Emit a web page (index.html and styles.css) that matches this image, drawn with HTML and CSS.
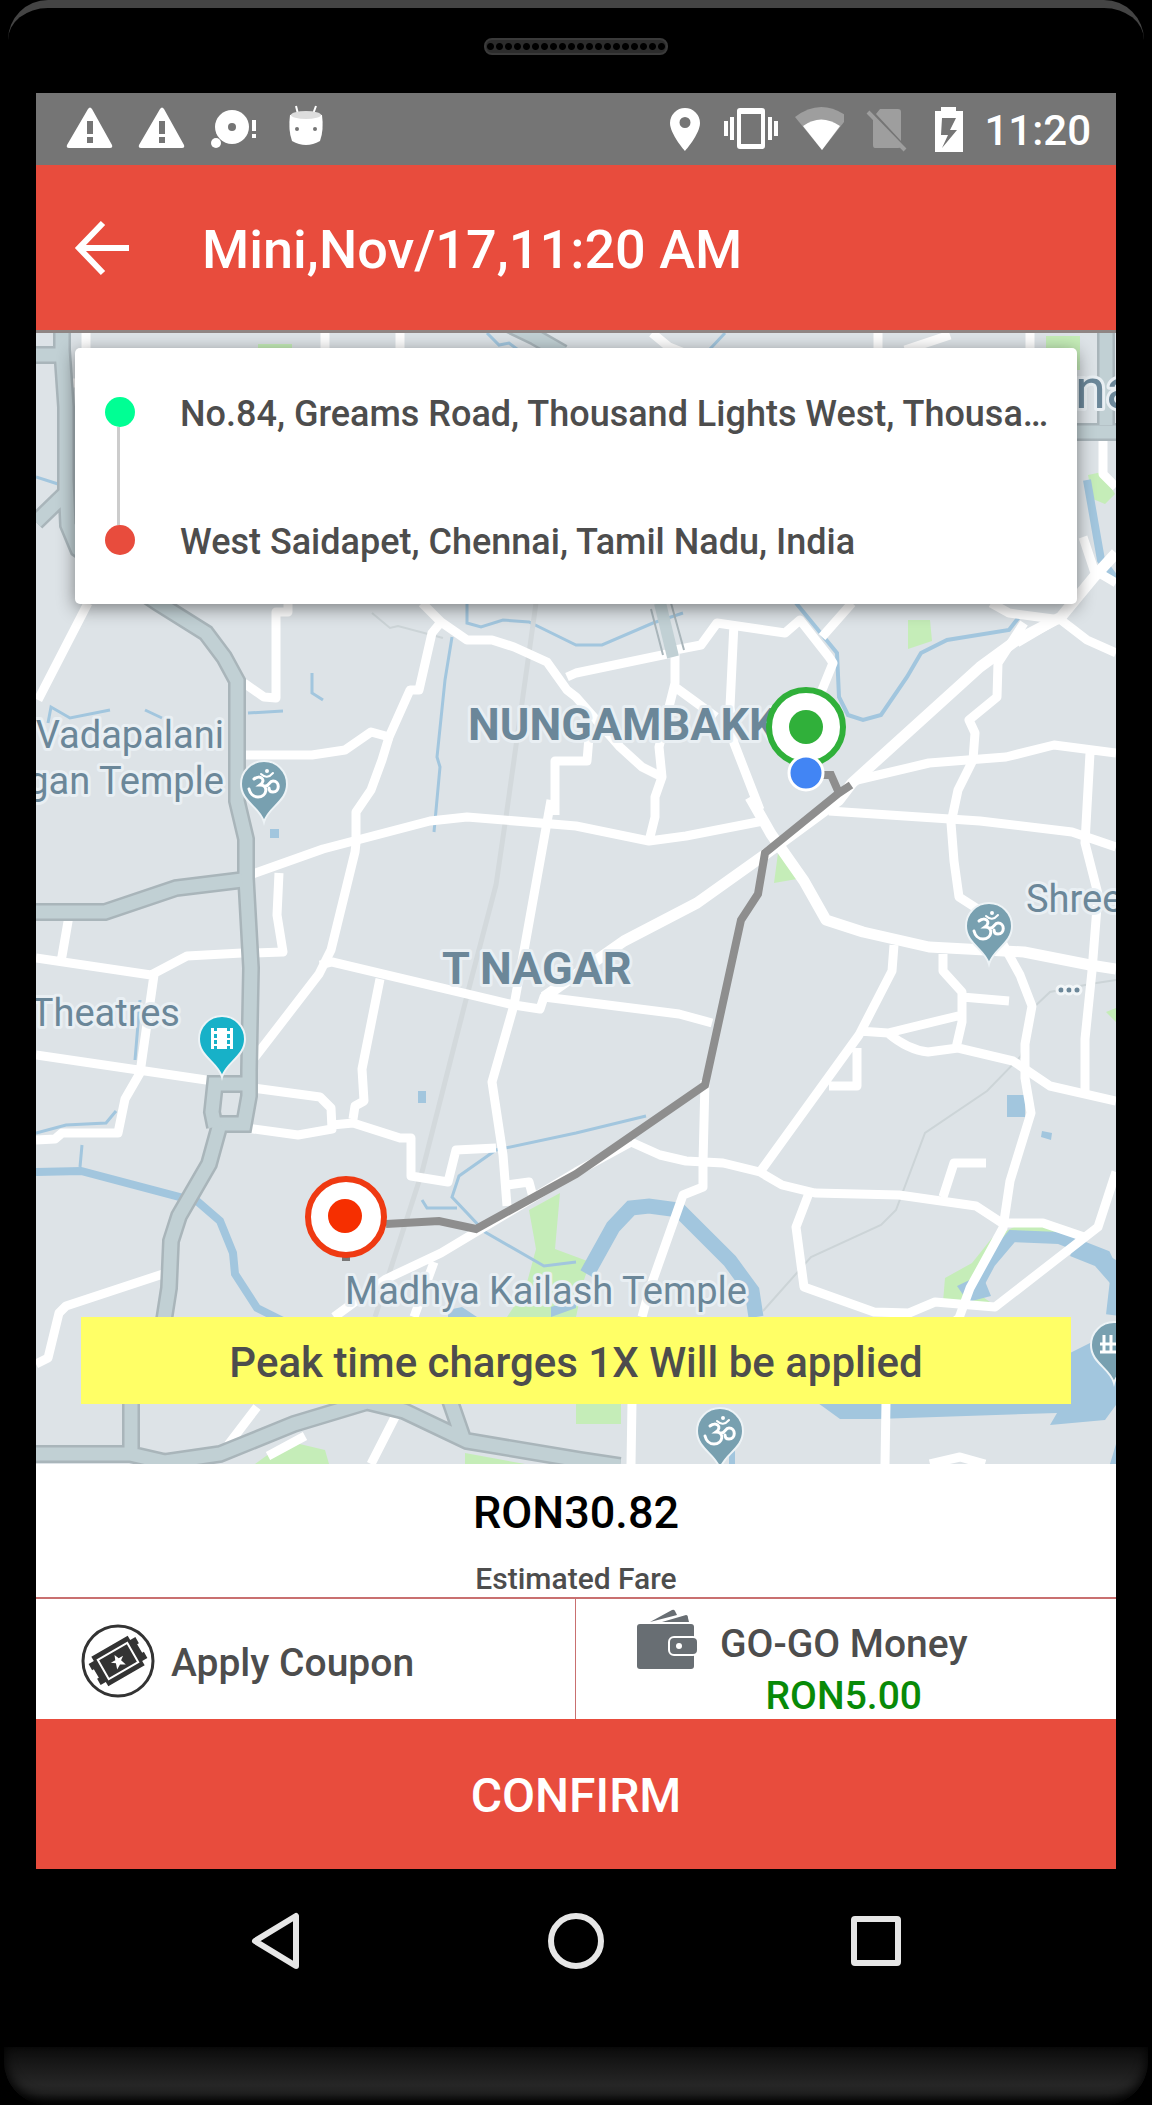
FILE: index.html
```
<!DOCTYPE html>
<html lang="en">
<head>
    <meta charset="UTF-8">
    <meta name="viewport" content="width=device-width, initial-scale=1.0">
    <title>Confirm ride</title>
    <link rel="stylesheet" href="styles.css">
</head>
<body>
    <div class="phone">
        <div class="bezel-top">
            <div class="speaker"></div>
        </div>

        <div class="screen">
            <!-- status bar -->
            <div class="status-bar">
                <div class="notifications">
                    <svg viewBox="0 0 48 48"><path fill="#fff" fill-rule="evenodd" d="M22 4q2-3 4 0l20 36q1 3-2 3H3q-3 0-2-3zM21 16v13h6V16zM21 32v6h6v-6z"/></svg>
                    <svg viewBox="0 0 48 48"><path fill="#fff" fill-rule="evenodd" d="M22 4q2-3 4 0l20 36q1 3-2 3H3q-3 0-2-3zM21 16v13h6V16zM21 32v6h6v-6z"/></svg>
                    <svg viewBox="0 0 48 48" fill="#fff"><circle cx="22" cy="22" r="17"/><circle cx="22" cy="22" r="4" fill="#757575"/><circle cx="6" cy="38" r="5"/><path d="M42 15h4v11h-4zM42 29h4v4h-4z"/></svg>
                    <svg viewBox="0 0 48 48"><path d="M14 1l2 8M34 1l-3 8" stroke="#fff" stroke-width="2"/><path fill="#fff" d="M8 10q16-5 32 0 2 15-2 26-14 8-28 0-4-11-2-26z"/><ellipse cx="24" cy="10" rx="15" ry="4" fill="#ddd"/><circle cx="15" cy="24" r="2" fill="#757575"/><circle cx="33" cy="24" r="2" fill="#757575"/></svg>
                </div>
                <div class="indicators">
                    <svg viewBox="0 0 54 54"><path fill="#fff" fill-rule="evenodd" d="M27 6a15 15 0 0 0-15 15c0 11 15 28 15 28s15-17 15-28A15 15 0 0 0 27 6zm0 9a5.500 5.500 0 1 1 0 11 5.500 5.500 0 0 1 0-11z"/></svg>
                    <svg viewBox="0 0 54 54" fill="#fff"><path fill-rule="evenodd" d="M16 6h22q3 0 3 3v35q0 3-3 3H16q-3 0-3-3V9q0-3 3-3zm1 6v30h20V12zM6 15h4v23H6zM44 15h4v23h-4zM0 19h4v15H0zM50 19h4v15h-4z"/></svg>
                    <svg viewBox="0 0 54 54"><path fill="#9e9e9e" d="M5 15q26-20 53 0L32 48z"/><path fill="#fff" d="M13 24q18-13 37 0L32 48z"/></svg>
                    <svg viewBox="0 0 54 54"><path fill="#9e9e9e" d="M24 7h18q3 0 3 3v29L20 12zM17 16l28 29q-1 1-3 1H19q-2 0-2-3z"/><path d="M12 10l37 38" stroke="#9e9e9e" stroke-width="4"/></svg>
                    <svg viewBox="0 0 54 54"><path fill="#fff" fill-rule="evenodd" d="M19 5h15v4h7v41H13V9h6zM20 16l-1 17h7l-6 13 15-18h-7l6-12z"/></svg>
                    <span class="clock">11:20</span>
                </div>
            </div>

            <header class="app-bar">
                <button class="back" aria-label="Back">
                    <svg viewBox="0 0 60 60"><path d="M31 5L7 30l24 25M7 30h50" fill="none" stroke="#fff" stroke-width="6"/></svg>
                </button>
                <h1>Mini,Nov/17,11:20 AM</h1>
            </header>

            <main class="map">
                <svg class="map-canvas" viewBox="36 333 1080 1131" role="img" aria-label="Route map">
                    <defs>
                        <g id="pin">
                            <path d="M0 38C-4 23-23 18-23 0a23 23 0 0 1 46 0C23 18 4 23 0 38z" stroke="#edf3f6" stroke-width="2"/>
                        </g>
                        <g id="om" fill="none" stroke="#fff" stroke-width="3" stroke-linecap="round">
                            <path d="M-10-5c6-5 13 1 6 6 9 0 7 12-2 12-5 0-8-4-9-8M1 2c4 1 4-5 8-5 7 0 7 11 0 11-3 0-4-2-4-4"/>
                            <path d="M-3-10q6 6 12-1" stroke-width="2"/>
                            <circle cx="3" cy="-13" r="1" stroke-width="2"/>
                        </g>
                        <!-- highways are drawn twice: edge first, then fill -->
                        <g id="highways">
                            <path d="M62 325V350l4 57v86L36 522M66 480l2 45 10 24 80 54 48 30 18 24 13 24v120l9 38v39l5 90-2 102v26l-5 28h-24l-11 40-30 52-8 25-2 47-7 45"/>
                            <path d="M215 1127l-3-15 3-28h31M30 912h75l71-24 66-8M30 355h30M131 1390v64M30 1454h100l35 8 55-8 74-30 73-22 37 9 63 30 113 19 40 6M448 1395l16 46"/>
                            <path d="M500 320l35 17 28 16M1106 325v100M1077 432h50"/>
                        </g>
                    </defs>
                    <rect x="36" y="333" width="1080" height="1131" fill="#dde3e7"/>

                    <!-- parks -->
                    <g fill="#c5edb8">
                        <path d="M908 620h22l2 21-24 8zM778 853l19 26-23 4zM258 344h34v8h-34zM1046 336h34v34h-34zM1088 475l14-3 13 22-10 10-12-5z"/>
                        <path d="M529 1210l31-17-5 56 35 13-6 18-8 37h-69l18-27 11-41zM255 1464l32-23 38 9 4 14zM465 1453l60 11h-60zM576 1402h45v22h-45zM1106 1012l10-4v14z"/>
                        <path d="M943 1302l2-24 27-15 20-25 22-11 45-3 16 10-62 3-28 25-15 26 20 14-5 6z"/>
                    </g>

                    <!-- water -->
                    <g fill="none" stroke="#a2c6de" stroke-width="3">
                        <path d="M452 637l-7 43-8 77 3 10-6 65M467 600v23l14 4 22-7 26 2 47 23h26l51-22 30-10M487 333l12 12 10-2 12 9M725 333l-15 16"/>
                        <path d="M796 603l41 50 2 44 9 18 15 5 18-5 26-38 14-24 26-13 62-10 13-17" stroke-width="4"/>
                        <path d="M646 1116l-70 17-80 17-37 26-7 21 33 35 59 34 32-4M48 723l3-16 19 11 40-8M145 710l17 8M248 713l35-2M312 673v20l11 7M36 477l22 7M140 1000l-5 60M36 1133l30-8 40-2 10-12M82 1145l-2 22M422 1200l5 8 30 0"/>
                        <path d="M1087 480l14 80 15 20" stroke-width="8"/>
                        <path d="M36 1172l45-1 117 31 22 19 13 32 2 21 22 34 26 13" stroke-width="8"/>
                        <path d="M587 1274l26-47 18-19 18-2 30 4 51 51 22 30 4 26" stroke-width="15"/>
                        <path d="M975 1290l15-28 22-26 47 2 46 18 11 24-4 35" stroke-width="12"/>
                    </g>
                    <g fill="#a2c6de">
                        <path d="M957 1286l25-12 9 22-23 6zM1007 1095h18v22h-18zM1042 1131l10 2-1 7-10-3zM270 829h9v9h-9zM418 1091h8v12h-8zM1078 1238l38 22v30l-21-24-25-10z"/>
                        <path d="M800 1390l40 29h37l180-6-7 12 55-5 11-15v-75l-60 30-30 30zM576 1308l-25 9v-10l25-8zM448 1310l14-3 15 10h-29zM1110 1464l6-20v20zM735 1420h-6v44h6z"/>
                    </g>

                    <!-- rail and footpaths -->
                    <path d="M536 603l-29 207-11 75-26 99-48 188-47 145" fill="none" stroke="#d3d9dc" stroke-width="5"/>
                    <path d="M1116 980l-26 4-40 8-18 17-11 47-34 35-62 42-29 77-15 15-70 32-48 54M372 613l18 15 8-2 45 12" fill="none" stroke="#ccd4d7" stroke-width="2"/>

                    <!-- roads -->
                    <g fill="none" stroke="#fff" stroke-width="9" stroke-linejoin="round">
                        <path d="M86 325v30M325 325v30M400 325v30M652 333l17 14 15 6M878 325v30M905 350l45-15M1030 325v30M88 603L38 700M288 600v12h-12v86l-12-1-20-14M70 383h12M70 417h12"/>
                        <path d="M422 603l19 19 26 18h25l22 7 33 15 20 28 9 7 44 50 22 20 20 10M441 622l-9 11-13 57h-9l-21 47-7 23-11 30-15 22v31l-1 9-24 98-12 24-67 87"/>
                        <path d="M244 755h68l33-5 26-18 22 6M555 815v-54h32l2-24M567 677l9-4 96-20M551 800l-26 145-11 60-22 77 11 73 4 51"/>
                        <path d="M250 875l73-26 107-28 37-4 109 9 73 15 37-5 77-15M279 873l-2 42 6 37-30 1M36 958l115 17 36-19 55-3M70 910l-9 52M154 975l-14 98-15 26-7 34H62l-7 6-19 1M36 1055l177 26"/>
                        <path d="M253 1088l67 9 11 11 1 21-34 6-52-7M332 1125l21-2 47 15h11v38l37 6 8-32 40-2M353 1119l2-13 9-5-2-32 18-90M320 965l12-3 182 43 26 4 4-12 32 4 103 13 33 9"/>
                        <path d="M544 997l50-35 30-21 73-38 66-47 76-56 13-17 128-116 37-27 44-23 33-40 22-24" stroke-width="11"/>
                        <path d="M1061 617l-44 26M1024 623l-26 40-1 34-28 23 6 13-2 27-15 30-7 33 3 38 5 36 28 18 33 60 12 31-7 38v34l6 35-21 68-7 47-33 60-11 30-28 22"/>
                        <path d="M991 603l18 10 52 7 26 20 29 13M1083 537l11 33 22 13M1103 437v37l13 13M857 780l72-17 77-6 48-12 62 8M1090 753l-5 90 13 51-6 77-7 68v56M829 811l151 10 92 11 44 15"/>
                        <path d="M675 650l26-5 16-22 68 10 15-13 29 37 4 6-11 27M852 603l-30 34M734 623l-4 84 4 36 26 67M675 650v33l-16 64 3 30-7 20v20l-6 24M675 687l41 30M820 690l-10 40"/>
                        <path d="M750 797l21 37 33 47 22 39 37 12 66 15 95 5 66 13 26 4" stroke-width="11"/>
                        <path d="M894 945l-2 26-33 64-99 137M943 954v17l19 21v30l-6 26M962 997l47 4M859 1031l29 2 74-18M888 1033q20 17 40 19l30-4 55 13 37 25 66 15M857 1048v38h-28"/>
                        <path d="M705 1080l-2 83v24l-20 8-34 96-7 26M631 1142l29 13 26 6 37 2 37 9 22 13 33 8 84 2 77 11 26 17h41l44 15M943 1197l11-34h32"/>
                        <path d="M1116 1172l-18 55-103 80-60-5-26 11-35-1-70-25-8-60 13-34"/>
                        <path d="M631 1142l-55 30-100 60-35 21-55 26-52 38M434 1262l-20 55M257 1407l-29 38M395 1417l-24 47M305 1436l-37 20M632 1402l-1 62M886 1402l-1 62M163 1274l-97 32-7 7-11 45-12 6M507 1185l22-3 4 15M930 1464l30-7 25 7"/>
                    </g>

                    <use href="#highways" fill="none" stroke="#a9b5ba" stroke-width="18"/>
                    <use href="#highways" fill="none" stroke="#c1d0d4" stroke-width="13"/>
                    <path d="M660 603l13 54" stroke="#c1d0d4" stroke-width="12"/>
                    <path d="M651 609l12 46M671 603l13 47" stroke="#a9b5ba" stroke-width="2"/>

                    <!-- selected route -->
                    <path d="M820 775h11l8 18 12-8-12 8-74 60-7 41-17 26-36 165-129 89-100 55-37-8-53 3" fill="none" stroke="#8e8e8e" stroke-width="8"/>

                    <g class="places" font-size="38">
                        <text x="224" y="748" text-anchor="end">Vadapalani</text>
                        <text x="224" y="794" text-anchor="end">gan Temple</text>
                        <text x="180" y="1026" text-anchor="end">Theatres</text>
                        <text x="345" y="1304">Madhya Kailash Temple</text>
                        <text x="1026" y="912">Shree</text>
                        <text x="1075" y="408" font-size="56">na</text>
                    </g>
                    <g class="places districts" font-size="45">
                        <text x="468" y="740">NUNGAMBAKK</text>
                        <text x="442" y="984">T NAGAR</text>
                    </g>
                    <g fill="#6b8799" stroke="#f2f6f8" stroke-width="3"><circle cx="1061" cy="990" r="4"/><circle cx="1069" cy="990" r="4"/><circle cx="1077" cy="990" r="4"/></g>

                    <g transform="translate(264 784)"><use href="#pin" fill="#78a0b0"/><use href="#om"/></g>
                    <g transform="translate(989 926)"><use href="#pin" fill="#78a0b0"/><use href="#om"/></g>
                    <g transform="translate(720 1431)"><use href="#pin" fill="#78a0b0"/><use href="#om"/></g>
                    <g transform="translate(1114 1345)"><use href="#pin" fill="#78a0b0"/><path d="M-14 7H2M-10-10V8M-14-1H2M-3-10V7" stroke="#fff" stroke-width="3"/></g>
                    <g transform="translate(222 1039)"><use href="#pin" fill="#17b1c8"/><path fill="#fff" fill-rule="evenodd" d="M-11-11h3v3h3v-3H5v3h3v-3h3V10H8V7H5v3H-5V7h-3v3h-3zM-8-5v4h3v-4zM-8 1v4h3V1zM5-5v4h3v-4zM5 1v4h3V1z"/></g>

                    <g>
                        <circle cx="806" cy="727" r="37" fill="#fff" stroke="#30b03a" stroke-width="6"/>
                        <circle cx="806" cy="727" r="17" fill="#30b03a"/>
                        <circle cx="806" cy="773" r="17" fill="#4285f4" stroke="#fff" stroke-width="3"/>
                        <path d="M342 1256h8v5h-8z" fill="#777"/>
                        <circle cx="346" cy="1217" r="38" fill="#fff" stroke="#ef3a12" stroke-width="6"/>
                        <circle cx="345" cy="1216" r="17" fill="#f62f00"/>
                    </g>
                </svg>

                <ul class="stops">
                    <li class="pickup"><span class="dot"></span><span class="address">No.84, Greams Road, Thousand Lights West, Thousand Lights, Chennai</span></li>
                    <li class="drop"><span class="dot"></span><span class="address">West Saidapet, Chennai, Tamil Nadu, India</span></li>
                </ul>

                <p class="peak">Peak time charges 1X Will be applied</p>
            </main>

            <section class="fare">
                <p class="amount">RON30.82</p>
                <p class="caption">Estimated Fare</p>
            </section>

            <div class="options">
                <button class="option coupon">
                    <svg viewBox="0 0 74 74">
                        <circle cx="37" cy="37" r="35" fill="#fff" stroke="#333" stroke-width="3"/>
                        <g transform="rotate(-30 37 37)">
                            <path fill="#333" d="M16 20h42v5h6v7h-2v10h2v7h-6v5H16v-5h-6v-7h2V32h-2v-7h6z"/>
                            <path fill="none" stroke="#fff" stroke-width="2" d="M20 26h34v22H20z"/>
                            <path fill="#fff" d="M37 30l2 5h5l-4 3 2 6-5-3-5 3 2-6-4-3h5z"/>
                        </g>
                    </svg>
                    <span>Apply Coupon</span>
                </button>
                <button class="option wallet">
                    <svg viewBox="0 0 64 64">
                        <g fill="#686e73">
                            <path d="M14 17L36 5q2-1 3 1l2 4zM26 17l24-7q2 0 2 3l1 4z"/>
                            <rect x="1" y="19" width="57" height="45" rx="3"/>
                            <rect x="33" y="32" width="29" height="18" rx="5" stroke="#fff" stroke-width="2"/>
                        </g>
                        <circle cx="43" cy="41" r="3" fill="#fff"/>
                    </svg>
                    <span class="wallet-text">
                        <span>GO-GO Money</span>
                        <span class="balance">RON5.00</span>
                    </span>
                </button>
            </div>

            <button class="confirm">CONFIRM</button>
        </div>

        <nav class="nav-bar">
            <button aria-label="Back"><svg viewBox="0 0 60 60"><path d="M50 5v50L9 30z"/></svg></button>
            <button aria-label="Home"><svg viewBox="0 0 60 60"><circle cx="30" cy="30" r="25"/></svg></button>
            <button aria-label="Recent apps"><svg viewBox="0 0 60 60"><rect x="8" y="8" width="44" height="44" rx="1"/></svg></button>
        </nav>
        <div class="chin"></div>
    </div>
</body>
</html>
```
FILE: styles.css
```
:root {
    --primary: #e84c3d;
    --text: #4d4d4d;
    --divider: #c97070;
    --place: #6b8799;
}

* {
    margin: 0;
    padding: 0;
    box-sizing: border-box;
}

body {
    background: #000;
    color: var(--text);
    font-family: Roboto, "Liberation Sans", sans-serif;
    font-weight: 500;
}

button {
    border: none;
    background: none;
    color: inherit;
    font: inherit;
    cursor: pointer;
}

svg {
    display: block;
    flex: none;
}

.phone {
    display: flex;
    flex-direction: column;
    min-height: 100vh;
}

/* phone body */
.bezel-top {
    display: flex;
    justify-content: center;
    align-items: flex-start;
    height: 93px;
    margin: 0 8px;
    padding-top: 30px;
    border-top: 8px solid #444;
    border-radius: 40px 40px 0 0;
}

.speaker {
    width: 184px;
    height: 17px;
    border: 2px solid #3a3a3a;
    border-radius: 8px;
    background: radial-gradient(circle, #000 3px, #2c2c2c 4px) 0 0 / 9px 13px;
}

.chin {
    flex: 1;
    min-height: 58px;
    margin: 0 4px;
    border-radius: 0 0 44px 44px;
    background: linear-gradient(#0c0c0c, #262626 65%, #222 80%, #0a0a0a);
    box-shadow: inset 0 -4px 12px #000;
}

.screen {
    margin: 0 36px;
    background: #fff;
}

/* status bar */
.status-bar {
    display: flex;
    justify-content: space-between;
    align-items: center;
    height: 72px;
    padding: 0 25px 0 30px;
    background: #757575;
    color: #fff;
}

.notifications,
.indicators {
    display: flex;
    align-items: center;
}

.notifications {
    gap: 24px;
}

.notifications svg {
    width: 48px;
    height: 48px;
}

.indicators {
    gap: 12px;
}

.indicators svg {
    width: 54px;
    height: 54px;
}

.clock {
    margin-left: -4px;
    padding-top: 4px;
    font-size: 42px;
    line-height: 48px;
}

.app-bar {
    display: flex;
    align-items: center;
    gap: 70px;
    height: 168px;
    padding: 0 36px;
    border-bottom: 3px solid #8f8583;
    background: var(--primary);
    color: #fff;
}

.back svg {
    width: 60px;
    height: 60px;
}

.app-bar h1 {
    padding-top: 4px;
    font-size: 54px;
    font-weight: 500;
    line-height: 64px;
}

/* map */
.map {
    position: relative;
    overflow: hidden;
}

.map-canvas {
    width: 100%;
    height: auto;
}

.places {
    fill: var(--place);
    stroke: #e9eff3;
    stroke-width: 6px;
    stroke-linejoin: round;
    paint-order: stroke;
    font-weight: 400;
}

.districts {
    font-weight: 700;
}

.stops {
    position: absolute;
    top: 15px;
    left: 39px;
    right: 39px;
    border-radius: 5px;
    background: #fff;
    box-shadow: 0 4px 18px rgba(0, 0, 0, 0.45);
    list-style: none;
}

.stops li {
    position: relative;
    display: flex;
    align-items: center;
    gap: 45px;
    height: 128px;
    padding: 0 20px 0 30px;
    font-size: 36px;
    line-height: 44px;
}

.dot {
    flex: none;
    width: 30px;
    height: 30px;
    border-radius: 50%;
    background: #00ff94;
}

.drop .dot {
    background: var(--primary);
}

.pickup::after {
    content: "";
    position: absolute;
    top: 79px;
    left: 42px;
    width: 3px;
    height: 98px;
    background: #ccc;
}

.address {
    overflow: hidden;
    padding-top: 4px;
    text-overflow: ellipsis;
    white-space: nowrap;
}

.peak {
    position: absolute;
    bottom: 60px;
    left: 45px;
    right: 45px;
    padding: 22px 20px 17px;
    background: #ffff66;
    font-size: 42px;
    line-height: 48px;
    text-align: center;
}

/* fare */
.fare {
    padding-top: 21px;
    border-bottom: 2px solid var(--divider);
    text-align: center;
}

.amount {
    color: #000;
    font-size: 45px;
    line-height: 56px;
}

.caption {
    padding-top: 20px;
    font-size: 30px;
    line-height: 36px;
}

.options {
    display: grid;
    grid-template-columns: 1fr 1fr;
}

.option {
    display: flex;
    height: 120px;
    font-size: 39px;
    line-height: 52px;
    text-align: left;
}

.coupon {
    align-items: center;
    gap: 16px;
    padding: 4px 45px 0;
    border-right: 1px solid var(--divider);
}

.coupon svg {
    width: 74px;
    height: 74px;
}

.coupon span {
    padding-top: 4px;
}

.wallet {
    gap: 20px;
    padding: 6px 60px;
}

.wallet > svg {
    width: 64px;
    height: 64px;
}

.wallet-text {
    display: flex;
    flex-direction: column;
    padding-top: 13px;
    text-align: center;
}

.balance {
    color: #088a08;
}

.confirm {
    display: block;
    width: 100%;
    height: 150px;
    padding-top: 4px;
    background: var(--primary);
    color: #fff;
    font-size: 48px;
    line-height: 56px;
}

/* system navigation */
.nav-bar {
    display: flex;
    justify-content: center;
    gap: 240px;
    padding: 42px 0 76px;
}

.nav-bar svg {
    width: 60px;
    height: 60px;
    fill: none;
    stroke: #e6e6e6;
    stroke-width: 6px;
    stroke-linejoin: round;
}
```
